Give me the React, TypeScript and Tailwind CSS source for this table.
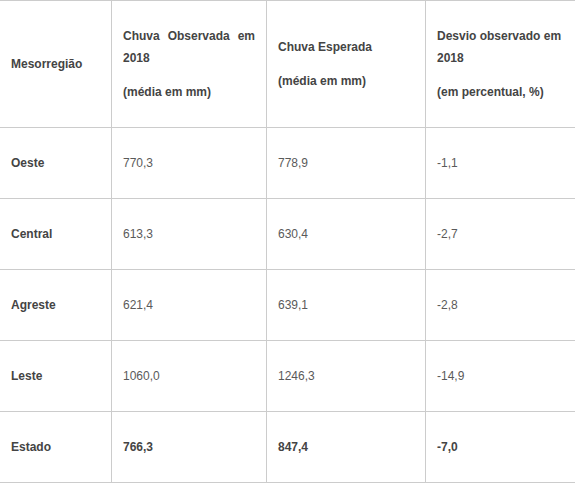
import React from "react";

const rows = [
  { name: "Oeste", obs: "770,3", esp: "778,9", desv: "-1,1" },
  { name: "Central", obs: "613,3", esp: "630,4", desv: "-2,7" },
  { name: "Agreste", obs: "621,4", esp: "639,1", desv: "-2,8" },
  { name: "Leste", obs: "1060,0", esp: "1246,3", desv: "-14,9" },
];

const grid = "grid grid-cols-[111px_155px_159px_150px]";
const cell = "flex flex-col justify-center px-[11px]";

export default function App() {
  return (
    <div
      className="w-[575px] h-[483px] bg-white overflow-hidden text-[12px] leading-[22px]"
      style={{ fontFamily: '"Liberation Sans", Arial, sans-serif' }}
    >
      <div className={`${grid} h-[128px] border-t border-b border-[#cccccc] font-bold text-[#444444]`}>
        <div className={cell}>
          <p>Mesorregião</p>
        </div>
        <div className={`${cell} border-l border-[#cccccc]`}>
          <p className="text-justify">Chuva Observada em 2018</p>
          <p className="mt-[12px]">(média em mm)</p>
        </div>
        <div className={`${cell} border-l border-[#cccccc]`}>
          <p>Chuva Esperada</p>
          <p className="mt-[12px]">(média em mm)</p>
        </div>
        <div className={`${cell} border-l border-[#cccccc]`}>
          <p>Desvio observado em 2018</p>
          <p className="mt-[12px]">(em percentual, %)</p>
        </div>
      </div>
      {rows.map((r) => (
        <div key={r.name} className={`${grid} h-[71px] border-b border-[#cccccc]`}>
          <div className={`${cell} font-bold text-[#444444]`}>{r.name}</div>
          <div className={`${cell} border-l border-[#cccccc] text-[#5a5a5a]`}>{r.obs}</div>
          <div className={`${cell} border-l border-[#cccccc] text-[#5a5a5a]`}>{r.esp}</div>
          <div className={`${cell} border-l border-[#cccccc] text-[#5a5a5a]`}>{r.desv}</div>
        </div>
      ))}
      <div className={`${grid} h-[71px] border-b border-[#cccccc] font-bold text-[#444444]`}>
        <div className={cell}>Estado</div>
        <div className={`${cell} border-l border-[#cccccc]`}>766,3</div>
        <div className={`${cell} border-l border-[#cccccc]`}>847,4</div>
        <div className={`${cell} border-l border-[#cccccc]`}>-7,0</div>
      </div>
    </div>
  );
}
